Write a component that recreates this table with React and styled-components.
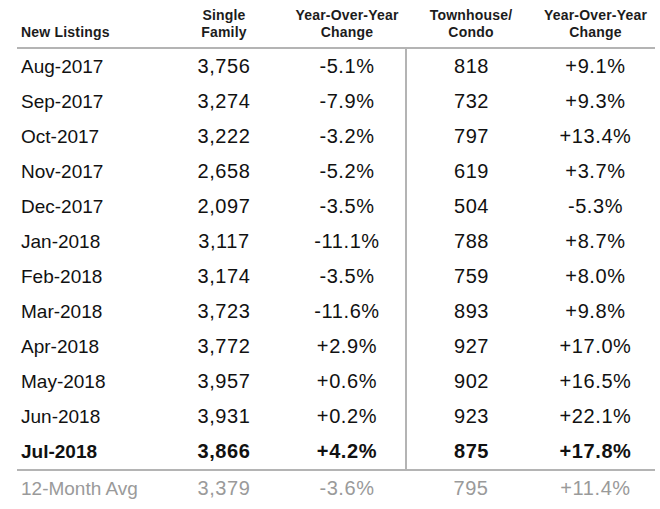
import React from "react";
import styled, { createGlobalStyle } from "styled-components";

const rows = [
  ["Aug-2017", "3,756", "-5.1%", "818", "+9.1%"],
  ["Sep-2017", "3,274", "-7.9%", "732", "+9.3%"],
  ["Oct-2017", "3,222", "-3.2%", "797", "+13.4%"],
  ["Nov-2017", "2,658", "-5.2%", "619", "+3.7%"],
  ["Dec-2017", "2,097", "-3.5%", "504", "-5.3%"],
  ["Jan-2018", "3,117", "-11.1%", "788", "+8.7%"],
  ["Feb-2018", "3,174", "-3.5%", "759", "+8.0%"],
  ["Mar-2018", "3,723", "-11.6%", "893", "+9.8%"],
  ["Apr-2018", "3,772", "+2.9%", "927", "+17.0%"],
  ["May-2018", "3,957", "+0.6%", "902", "+16.5%"],
  ["Jun-2018", "3,931", "+0.2%", "923", "+22.1%"],
  ["Jul-2018", "3,866", "+4.2%", "875", "+17.8%"],
];

const average = ["12-Month Avg", "3,379", "-3.6%", "795", "+11.4%"];

const GlobalStyle = createGlobalStyle`
  html, body {
    margin: 0;
    padding: 0;
    background: #ffffff;
  }
  body {
    font-family: "Liberation Sans", Arial, Helvetica, sans-serif;
    color: #111111;
  }
`;

const Table = styled.div`
  width: 638px;
  margin-left: 17px;
  display: flex;
  flex-direction: column;
`;

const COLUMNS = "143px 128px 118px 130px 119px";

const HeaderRow = styled.div`
  display: grid;
  grid-template-columns: ${COLUMNS};
  align-items: end;
  height: 41px;
  padding-bottom: 6px;
  border-bottom: 2px solid #b4b4b4;
`;

const HeaderCell = styled.div`
  font-size: 14px;
  font-weight: 700;
  line-height: 17px;
  letter-spacing: 0.2px;
  color: #1c1c1c;
  text-align: ${(p) => (p.$first ? "left" : "center")};
  padding-left: ${(p) => (p.$first ? "4px" : "0")};
`;

const Body = styled.div`
  display: flex;
  flex-direction: column;
  border-bottom: 2px solid #b4b4b4;
`;

const Row = styled.div`
  display: grid;
  grid-template-columns: ${COLUMNS};
  height: 35px;
  font-weight: ${(p) => (p.$bold ? 700 : 400)};
`;

const Cell = styled.div`
  display: flex;
  align-items: center;
  justify-content: ${(p) => (p.$first ? "flex-start" : "center")};
  padding-left: ${(p) => (p.$first ? "4px" : "0")};
  font-size: ${(p) => (p.$first ? "19px" : "20px")};
  letter-spacing: ${(p) => (p.$first ? "0" : "0.6px")};
  border-left: ${(p) => (p.$divider ? "2px solid #b4b4b4" : "none")};
  margin-left: ${(p) => (p.$divider ? "-1px" : "0")};
`;

const FooterRow = styled(Row)`
  color: #9a9a9a;
`;

function DataRow({ cells, bold }) {
  return (
    <Row $bold={bold}>
      {cells.map((c, i) => (
        <Cell key={i} $first={i === 0} $divider={i === 3}>
          {c}
        </Cell>
      ))}
    </Row>
  );
}

export default function App() {
  return (
    <>
      <GlobalStyle />
      <Table>
        <HeaderRow>
          <HeaderCell $first>New Listings</HeaderCell>
          <HeaderCell>
            Single
            <br />
            Family
          </HeaderCell>
          <HeaderCell>
            Year-Over-Year
            <br />
            Change
          </HeaderCell>
          <HeaderCell>
            Townhouse/
            <br />
            Condo
          </HeaderCell>
          <HeaderCell>
            Year-Over-Year
            <br />
            Change
          </HeaderCell>
        </HeaderRow>
        <Body>
          {rows.map((r, i) => (
            <DataRow key={r[0]} cells={r} bold={i === rows.length - 1} />
          ))}
        </Body>
        <FooterRow>
          {average.map((c, i) => (
            <Cell key={i} $first={i === 0}>
              {c}
            </Cell>
          ))}
        </FooterRow>
      </Table>
    </>
  );
}
